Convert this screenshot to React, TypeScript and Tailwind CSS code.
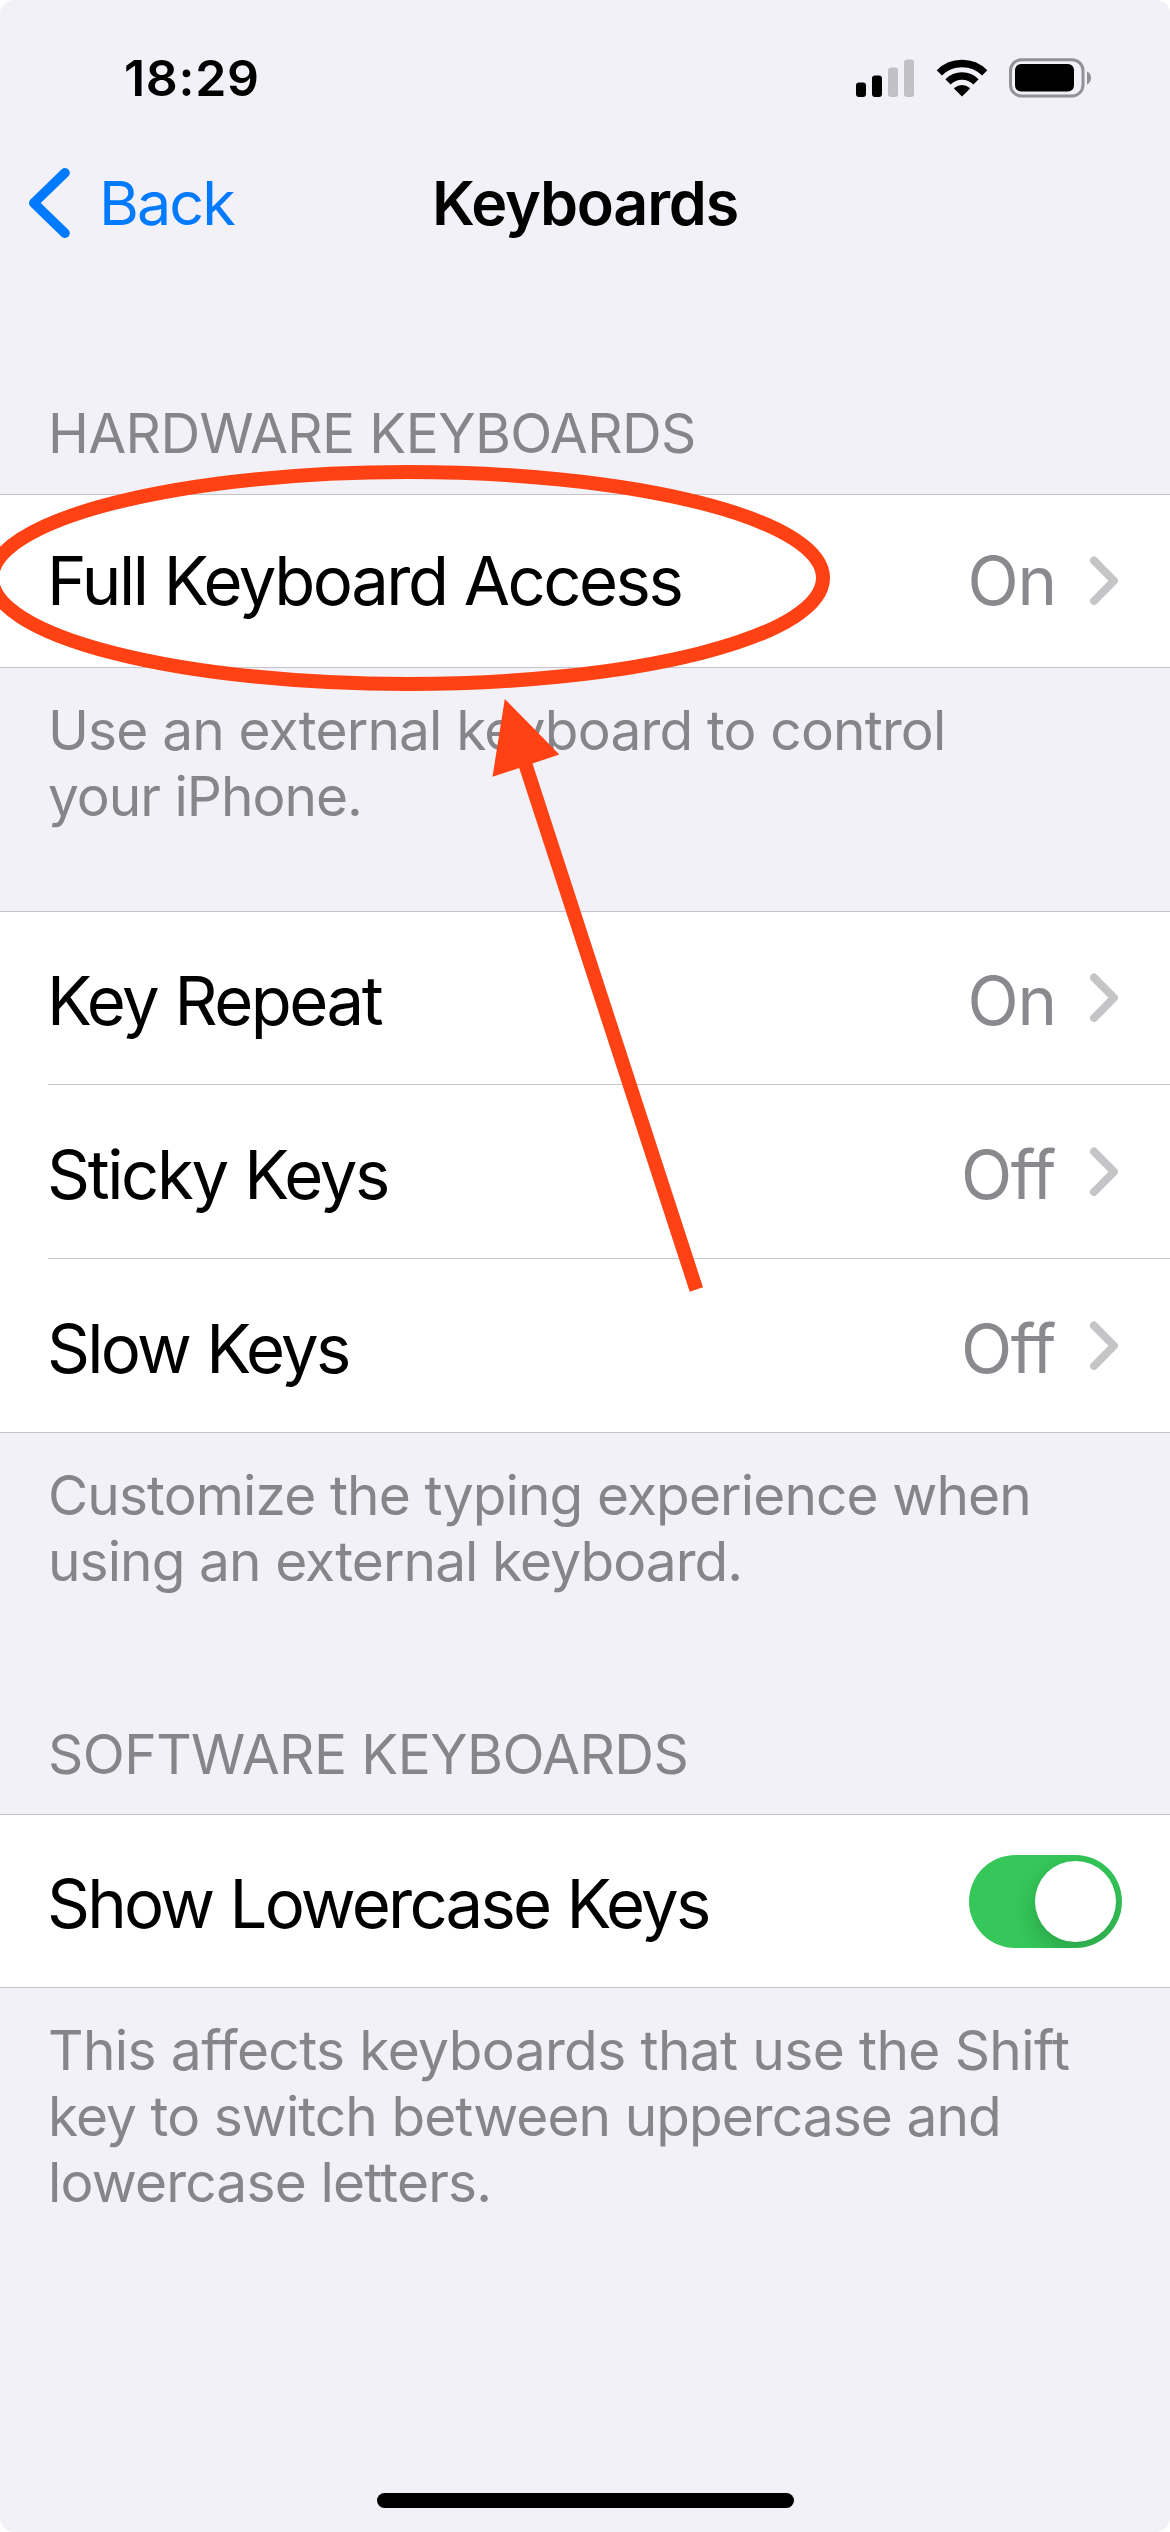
import React from "react";

function SignalIcon() {
  return (
    <svg width="58" height="38" viewBox="0 0 58 38" className="block">
      <rect x="0" y="23.5" width="10" height="14.5" rx="3" fill="#000" />
      <rect x="16" y="16.5" width="10" height="21.5" rx="3" fill="#000" />
      <rect x="32" y="8.5" width="10" height="29.5" rx="3" fill="#c1c0c5" />
      <rect x="48" y="0.5" width="10" height="37.5" rx="3" fill="#c1c0c5" />
    </svg>
  );
}

function WifiIcon() {
  return (
    <svg width="52" height="38" viewBox="0 0 52 38" className="block">
      <g fill="none" stroke="#000" strokeWidth="7.4">
        <path d="M3.3 13.9A32.2 32.2 0 0 1 48.7 13.9" />
        <path d="M12 22.8A19.8 19.8 0 0 1 40 22.8" />
      </g>
      <path
        d="M26 37.6L18.4 30.1A1 1 0 0 1 18.5 28.7A11.5 11.5 0 0 1 33.5 28.7A1 1 0 0 1 33.6 30.1Z"
        fill="#000"
      />
    </svg>
  );
}

function BatteryIcon() {
  return (
    <svg width="84" height="40" viewBox="0 0 84 40" className="block">
      <rect x="1.5" y="1.7" width="72.5" height="36.3" rx="11" fill="none" stroke="#929196" strokeWidth="3" />
      <rect x="6" y="6" width="59" height="27.5" rx="6" fill="#000" />
      <path d="M78 13.6C80.6 14.8 82 17 82 20S80.6 25.2 78 26.4Z" fill="#929196" />
    </svg>
  );
}

function Chevron() {
  return (
    <svg width="28" height="50" viewBox="0 0 28 50" className="block">
      <path
        d="M4 4.6L24 24.7L4 45"
        fill="none"
        stroke="#c5c5c7"
        strokeWidth="8"
        strokeLinecap="round"
        strokeLinejoin="round"
      />
    </svg>
  );
}

function Toggle() {
  return (
    <div className="flex h-[93px] w-[153px] items-center justify-end overflow-hidden rounded-full bg-[#35c759] p-[6px]">
      <div className="size-[81px] rounded-full bg-white shadow-[0_9px_24px_rgba(0,0,0,0.2)]" />
    </div>
  );
}

function Row({
  label,
  labelClass,
  className,
  textClass = "pt-[6px]",
  children,
}: {
  label: string;
  labelClass: string;
  className: string;
  textClass?: string;
  children: React.ReactNode;
}) {
  return (
    <div className={`flex items-center justify-between ${className}`}>
      <span
        className={`-ml-px text-[67px] leading-[80px] [word-spacing:1px] whitespace-nowrap text-black ${labelClass} ${textClass}`}
      >
        {label}
      </span>
      {children}
    </div>
  );
}

function Value({ on, textClass = "pt-[6px]" }: { on: boolean; textClass?: string }) {
  return (
    <div className="flex items-center gap-[34px] pr-[52px]">
      <span
        className={`text-[67px] leading-[80px] text-[#8a898e] ${textClass} ${
          on ? "tracking-[-1.2px]" : "mr-px tracking-[-1.4px]"
        }`}
      >
        {on ? "On" : "Off"}
      </span>
      <Chevron />
    </div>
  );
}

function Heading({ className, children }: { className: string; children: string }) {
  return (
    <h2 className={`pl-[48px] text-[55px] leading-[66px] font-normal whitespace-nowrap text-[#86858a] ${className}`}>
      {children}
    </h2>
  );
}

function Footer({ lines }: { lines: { text: string; className: string }[] }) {
  return (
    <p className="pt-[29px] pl-[48px] text-[55px] leading-[66px] text-[#86858a]">
      {lines.map((line) => (
        <span key={line.text} className={`block whitespace-nowrap ${line.className}`}>
          {line.text}
        </span>
      ))}
    </p>
  );
}

function Annotation() {
  return (
    <svg
      width="1170"
      height="1400"
      viewBox="0 0 1170 1400"
      className="pointer-events-none absolute top-0 left-0 block"
    >
      <ellipse cx="407.5" cy="578" rx="415.5" ry="106" fill="none" stroke="#ff4114" strokeWidth="14" />
      <path
        d="M504.8 699L559.3 754.6L532.5 763.6L703 1287.3L689.7 1291.7L519.2 768L492.5 776.7Z"
        fill="#ff4114"
      />
    </svg>
  );
}

export default function App() {
  return (
    <div className="h-[2532px] w-[1170px] overflow-hidden bg-white font-['Inter',sans-serif]">
      <div className="relative flex h-full flex-col overflow-hidden rounded-[14px] bg-[#f2f1f7]">
        <div className="flex h-[156px] shrink-0 items-center justify-between pr-[77px] pl-[124px]">
          <span className="text-[50px] leading-[60px] font-semibold tracking-[0.7px] text-black">18:29</span>
          <div className="flex items-center">
            <SignalIcon />
            <div className="ml-[22px]">
              <WifiIcon />
            </div>
            <div className="ml-[21px]">
              <BatteryIcon />
            </div>
          </div>
        </div>

        <div className="grid h-[94px] shrink-0 grid-cols-[1fr_auto_1fr] items-center">
          <div className="flex items-center gap-[29px] pl-[28px] text-[#007aff]">
            <svg width="42" height="72" viewBox="0 0 42 72" className="block">
              <path
                d="M37 5.8L5.8 36L37 66.2"
                fill="none"
                stroke="currentColor"
                strokeWidth="9.6"
                strokeLinecap="round"
                strokeLinejoin="round"
              />
            </svg>
            <span className="text-[61px] leading-[72px] tracking-[-1.9px]">Back</span>
          </div>
          <h1 className="text-[61px] leading-[72px] font-semibold tracking-[-1.2px] text-black">Keyboards</h1>
          <div />
        </div>

        <Heading className="mt-[150px] mb-[28px] tracking-[-0.61px]">HARDWARE KEYBOARDS</Heading>
        <div className="border-y border-[#c5c5c8] bg-white">
          <Row label="Full Keyboard Access" labelClass="tracking-[-2.5px]" textClass="" className="h-[172px] pl-[48px]">
            <Value on textClass="" />
          </Row>
        </div>
        <Footer
          lines={[
            { text: "Use an external keyboard to control", className: "tracking-[-0.83px]" },
            { text: "your iPhone.", className: "tracking-[-1px]" },
          ]}
        />

        <div className="mt-[82px] border-y border-[#c5c5c8] bg-white pl-[48px]">
          <Row label="Key Repeat" labelClass="tracking-[-2.5px]" className="h-[172px]">
            <Value on />
          </Row>
          <Row label="Sticky Keys" labelClass="tracking-[-2.35px]" className="h-[174px] border-t border-[#c5c5c8]">
            <Value on={false} />
          </Row>
          <Row label="Slow Keys" labelClass="tracking-[-2.7px]" className="h-[174px] border-t border-[#c5c5c8]">
            <Value on={false} />
          </Row>
        </div>
        <Footer
          lines={[
            { text: "Customize the typing experience when", className: "tracking-[-0.88px]" },
            { text: "using an external keyboard.", className: "tracking-[-0.92px]" },
          ]}
        />

        <Heading className="mt-[127px] mb-[27px] tracking-[-0.55px]">SOFTWARE KEYBOARDS</Heading>
        <div className="border-y border-[#c5c5c8] bg-white">
          <Row label="Show Lowercase Keys" labelClass="tracking-[-2.75px]" className="h-[172px] pr-[48px] pl-[48px]">
            <Toggle />
          </Row>
        </div>
        <Footer
          lines={[
            { text: "This affects keyboards that use the Shift", className: "tracking-[-0.6px]" },
            { text: "key to switch between uppercase and", className: "tracking-[-0.93px]" },
            { text: "lowercase letters.", className: "tracking-[-0.8px]" },
          ]}
        />

        <div className="mt-auto mb-[24px] h-[15px] w-[417px] self-center rounded-full bg-black" />

        <Annotation />
      </div>
    </div>
  );
}
